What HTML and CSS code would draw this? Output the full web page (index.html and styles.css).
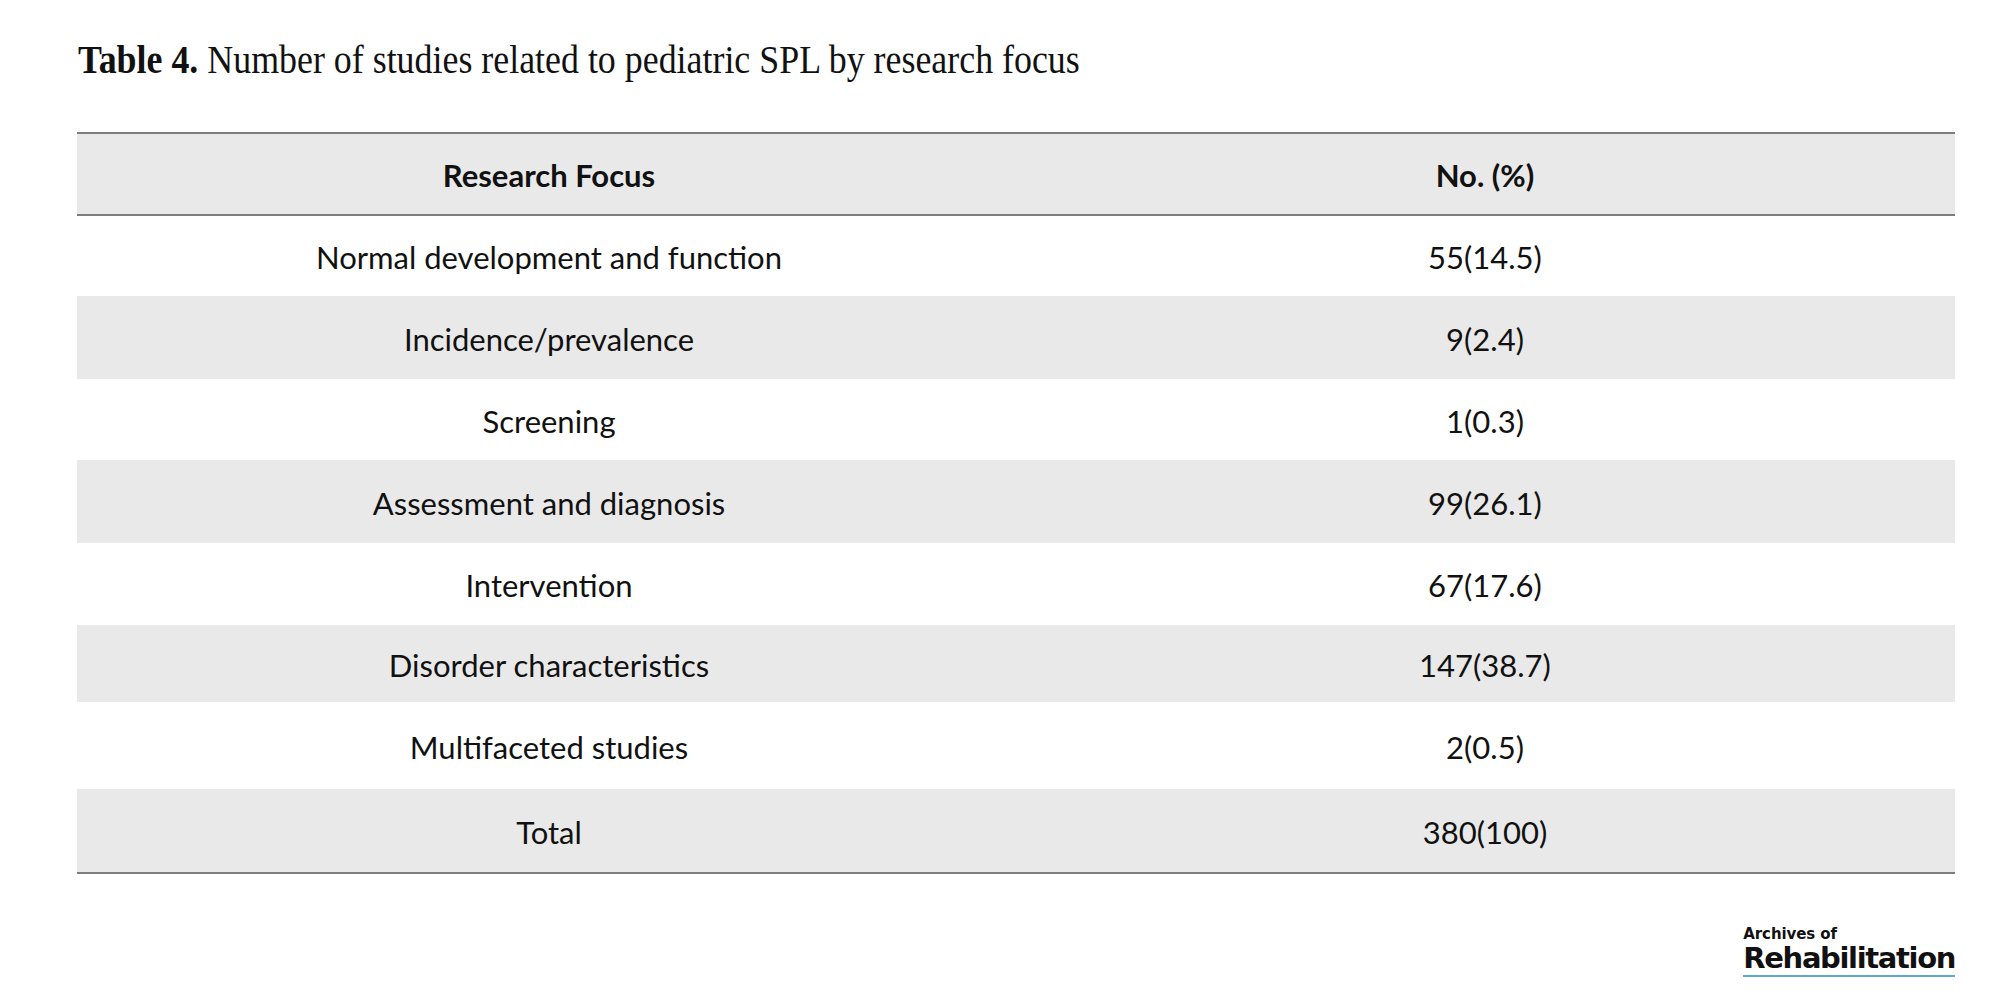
FILE: index.html
```html
<!DOCTYPE html>
<html lang="en">
<head>
<meta charset="utf-8">
<title>Table 4</title>
<link rel="stylesheet" href="styles.css">
</head>
<body>
<div class="page">
  <h1 class="caption"><span class="caption-text"><b>Table 4.</b> Number of studies related to pediatric SPL by research focus</span></h1>
  <div class="table">
    <div class="row head"><div class="cell">Research Focus</div><div class="cell num">No. (%)</div></div>
    <div class="row r1"><div class="cell">Normal development and function</div><div class="cell num">55(14.5)</div></div>
    <div class="row r2 alt"><div class="cell">Incidence/prevalence</div><div class="cell num">9(2.4)</div></div>
    <div class="row r3"><div class="cell">Screening</div><div class="cell num">1(0.3)</div></div>
    <div class="row r4 alt"><div class="cell">Assessment and diagnosis</div><div class="cell num">99(26.1)</div></div>
    <div class="row r5"><div class="cell">Intervention</div><div class="cell num">67(17.6)</div></div>
    <div class="row r6 alt"><div class="cell">Disorder characteristics</div><div class="cell num">147(38.7)</div></div>
    <div class="row r7"><div class="cell">Multifaceted studies</div><div class="cell num">2(0.5)</div></div>
    <div class="row r8 alt last"><div class="cell">Total</div><div class="cell num">380(100)</div></div>
  </div>
  <div class="footer">
    <div class="logo">
      <div class="logo-small">Archives of</div>
      <div class="logo-big">Rehabilitation</div>
    </div>
  </div>
</div>
</body>
</html>
```

FILE: styles.css
```css
html, body {
  margin: 0;
  padding: 0;
  background: #ffffff;
}

.page {
  width: 2000px;
  height: 1008px;
  overflow: hidden;
}

.caption {
  margin: 0;
  padding: 40px 0 0 78px;
  height: 53px;
  font-family: "Liberation Serif", "Times New Roman", serif;
  font-weight: normal;
  font-size: 39px;
  line-height: 39px;
  color: #111111;
  white-space: nowrap;
}

.caption-text {
  display: inline-block;
  transform: scaleX(0.92);
  transform-origin: left center;
}

.caption b {
  font-weight: bold;
}

.table {
  margin: 39px 0 0 77px;
  width: 1878px;
  border-top: 2px solid #7d7d7d;
  border-bottom: 2px solid #7d7d7d;
  font-family: Lato, "Open Sans", sans-serif;
  font-size: 31px;
  color: #111111;
}

.row {
  display: grid;
  grid-template-columns: 944px 1fr;
  height: 82px;
  align-items: center;
}

.row.head {
  height: 80px;
  background: #e9e9e9;
  border-bottom: 2px solid #7d7d7d;
  font-weight: bold;
}

.row.alt {
  background: #e9e9e9;
}

.r1 { height: 80px; }
.r2 { height: 83px; }
.r3 { height: 81px; }
.r4 { height: 83px; }
.r5 { height: 82px; }
.r6 { height: 77px; }
.r7 { height: 87px; }
.r8 { height: 83px; }

.cell {
  text-align: center;
  padding-top: 2px;
}

.cell.num {
  padding-right: 6px;
}

.footer {
  width: 1955px;
  display: flex;
  justify-content: flex-end;
  padding-top: 52px;
}

.logo {
  display: flex;
  flex-direction: column;
  align-items: flex-start;
  font-family: "DejaVu Sans", sans-serif;
  font-weight: bold;
  color: #111111;
}

.logo-small {
  font-size: 15px;
  line-height: 17px;
  letter-spacing: -0.1px;
}

.logo-big {
  font-size: 29px;
  line-height: 31px;
  letter-spacing: -1.35px;
  border-bottom: 2px solid #5fa6d0;
  padding-bottom: 1px;
}
```
